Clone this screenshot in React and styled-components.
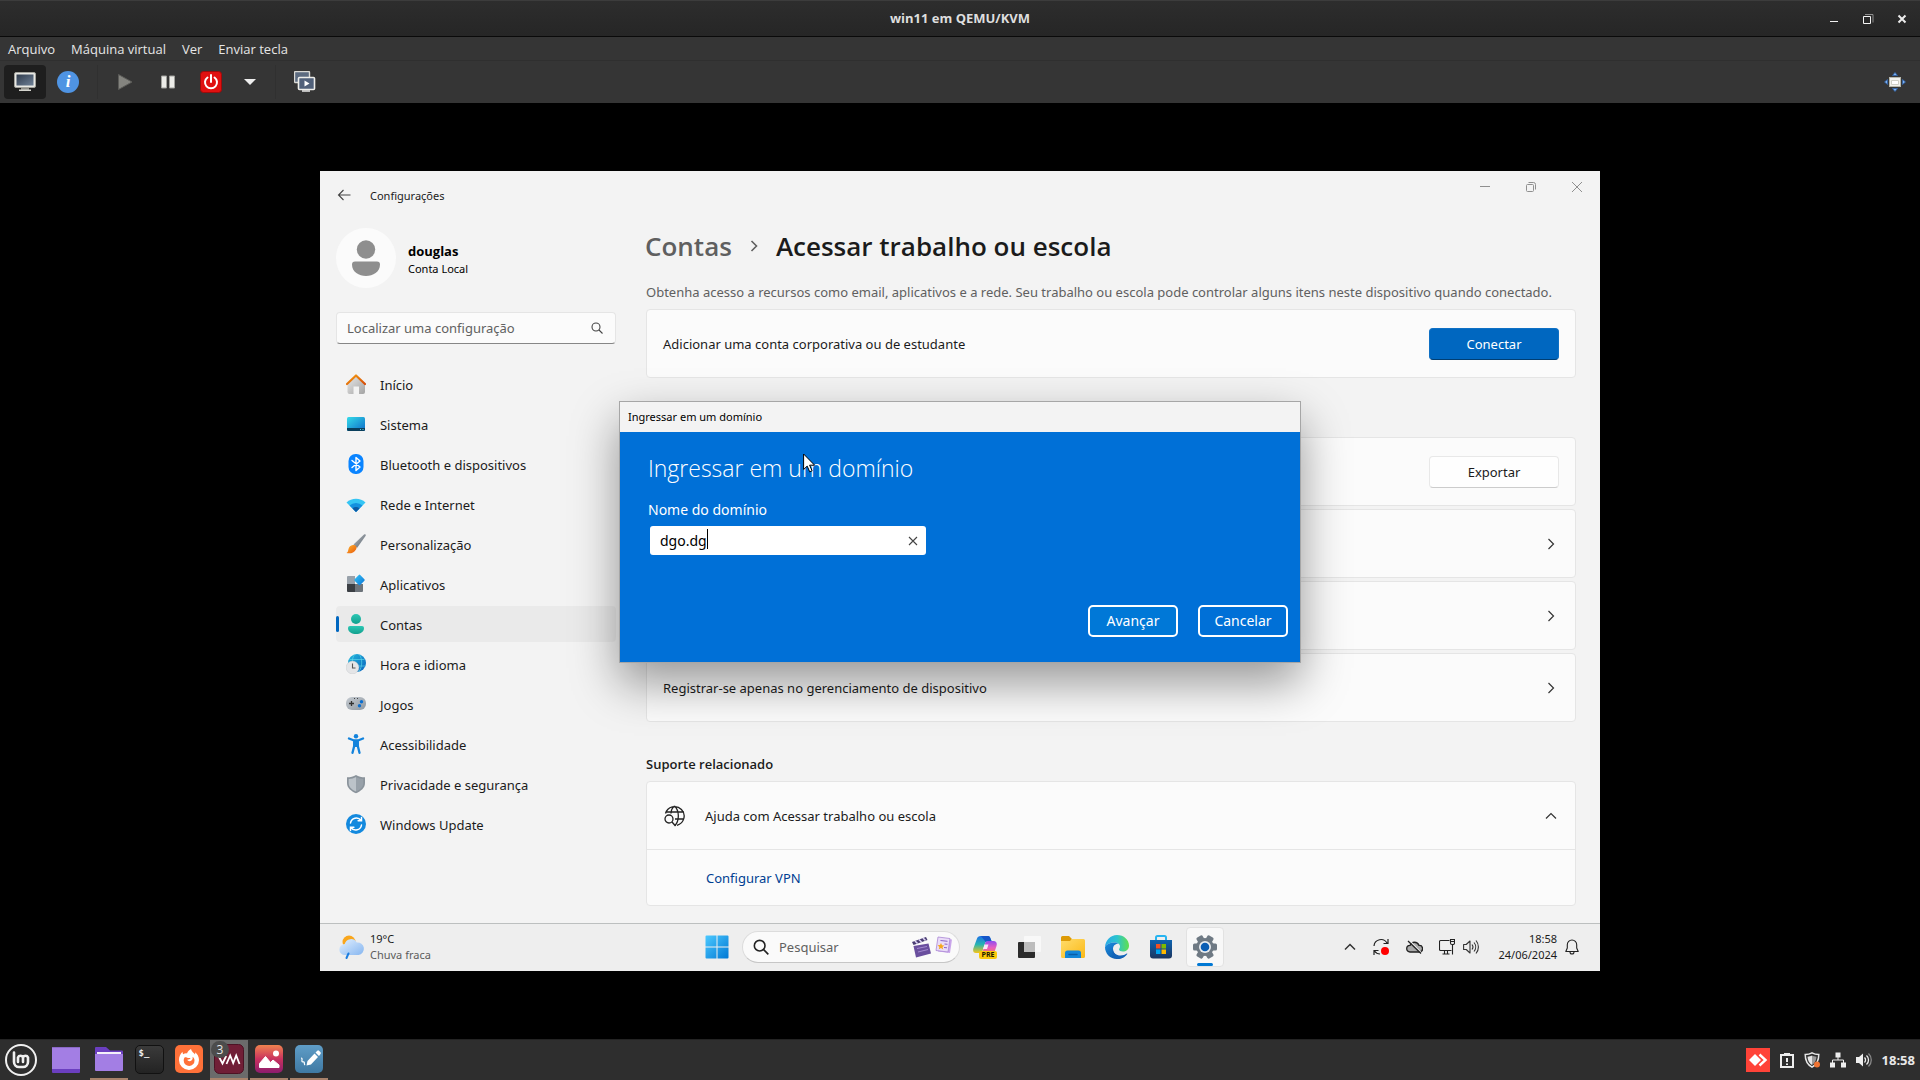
import React from "react";
import styled, { createGlobalStyle, css } from "styled-components";

const GlobalStyle = createGlobalStyle`
  *, *::before, *::after { box-sizing: border-box; }
  body { margin: 0; background: #000; }
  button, input { font: inherit; color: inherit; margin: 0; }
  button { border: 0; padding: 0; background: none; cursor: default; }
  h1, h2, p, ul { margin: 0; padding: 0; font-weight: inherit; }
  a { text-decoration: none; }
  svg { display: block; flex: none; }
`;

/* ---------- host desktop ---------- */

const Desktop = styled.div`
  min-height: 100vh;
  display: grid;
  grid-template-rows: auto auto auto 1fr auto;
  background: #000;
  color: #e6e6e6;
  font: 13px/20px "Open Sans", "Noto Sans", sans-serif;
`;

const HostTitleBar = styled.header`
  display: grid;
  grid-template-columns: 1fr auto 1fr;
  align-items: center;
  height: 37px;
  background: linear-gradient(#2d2d2d, #262626);
  border-top: 1px solid #3c3c3c;
  border-bottom: 1px solid #0a0a0a;
  color: #dedede;
`;

const HostTitle = styled.h1`
  grid-column: 2;
  padding-bottom: 2px;
  font-size: 13px;
  line-height: 20px;
  font-weight: 700;
`;

const HostControls = styled.div`
  display: flex;
  justify-content: flex-end;
  gap: 14px;
  padding-right: 8px;
`;

const IconButton = styled.button`
  display: grid;
  place-items: center;
  width: ${(p) => p.$w || 20}px;
  height: ${(p) => p.$h || 20}px;
`;

const MenuBar = styled.nav`
  display: flex;
  gap: 16px;
  height: 24px;
  padding: 2px 8px;
  background: #353535;
  border-bottom: 1px solid #2f2f2f;
`;

const MenuButton = styled.button`
  line-height: 20px;
`;

const ToolBar = styled.div`
  display: flex;
  align-items: center;
  height: 42px;
  padding: 4px 8px 4px 4px;
  background: #353535;
`;

const ToolButton = styled.button`
  display: grid;
  place-items: center;
  width: ${(p) => p.$w || 42}px;
  height: 34px;
  border-radius: 4px;
  background: ${(p) => (p.$pressed ? "#1e1e1e" : "transparent")};
`;

const ToolDivider = styled.span`
  width: 1px;
  height: 34px;
  margin: 0 ${(p) => p.$right}px 0 ${(p) => p.$left}px;
  background: #303030;
`;

const ToolSpacer = styled.span`
  flex: 1;
`;

const InfoBadge = styled.span`
  display: grid;
  place-items: center;
  width: 22px;
  height: 22px;
  border-radius: 50%;
  background: #4f94e3;
  color: #fff;
  font: italic 700 17px/22px "Liberation Serif", serif;
`;

const Display = styled.main`
  display: flex;
  align-items: center;
  padding: 0 calc(100% / 6);
`;

/* ---------- guest desktop ---------- */

const Guest = styled.section`
  position: relative;
  flex: 1;
  min-width: 0;
  background: #f3f3f3;
  color: #1b1b1b;
  font: 13px/20px "Noto Sans", "Open Sans", sans-serif;
`;

const SettingsTitleBar = styled.div`
  display: flex;
  align-items: center;
  height: 48px;
  padding-left: 14px;
`;

const SettingsTitle = styled.span`
  margin-left: 16px;
  padding-top: 2px;
  font-size: 11px;
  line-height: 16px;
`;

const SettingsControls = styled.div`
  display: flex;
  align-self: flex-start;
  margin-left: auto;
  color: #8f8f8f;
`;

const SettingsBody = styled.div`
  display: flex;
  gap: 30px;
  padding: 9px 24px 17px 16px;
`;

const Sidebar = styled.aside`
  flex: 0 0 280px;
`;

const Profile = styled.div`
  display: flex;
  align-items: center;
  gap: 12px;
  margin-bottom: 24px;
`;

const ProfileText = styled.div`
  padding-top: 4px;
  color: #000;
  font-size: 11px;
  line-height: 18px;
`;

const Avatar = styled.div`
  display: grid;
  place-items: center;
  width: 60px;
  height: 60px;
  border-radius: 50%;
  background: #fbfbfb;
`;

const ProfileName = styled.div`
  font: 700 13px/18px "Open Sans", sans-serif;
`;

const SearchBox = styled.label`
  display: flex;
  align-items: center;
  height: 32px;
  padding: 0 12px 0 10px;
  background: #fbfbfb;
  border: 1px solid #e5e5e5;
  border-bottom-color: #868686;
  border-radius: 4px;
`;

const PlainInput = styled.input`
  flex: 1;
  min-width: 0;
  padding: 0;
  border: 0;
  outline: 0;
  background: transparent;
  &::placeholder {
    color: #616161;
    opacity: 1;
  }
`;

const NavList = styled.nav`
  display: flex;
  flex-direction: column;
  gap: 4px;
  margin-top: 22px;
`;

const NavLabel = styled.span`
  padding-top: 2px;
`;

const NavItem = styled.a`
  display: flex;
  align-items: center;
  gap: 14px;
  height: 36px;
  padding-left: 10px;
  border-radius: 4px;
  color: #1b1b1b;
  ${(p) =>
    p.$active &&
    css`
      padding-left: 0;
      background: #eaeaea;
      &::before {
        content: "";
        width: 3px;
        height: 16px;
        margin-right: -7px;
        border-radius: 2px;
        background: #0067c0;
      }
    `}
`;

const Content = styled.div`
  flex: 1;
  min-width: 0;
`;

const Breadcrumb = styled.h2`
  display: flex;
  align-items: center;
  gap: 18px;
  margin: 0 0 18px -1px;
  font: 600 26px/36px "Open Sans", sans-serif;
`;

const BreadcrumbLink = styled.a`
  color: #5f5f5f;
`;

const Intro = styled.p`
  margin-bottom: 7px;
  color: #606060;
  white-space: nowrap;
`;

const cardFrame = css`
  background: #fbfbfb;
  border: 1px solid #e5e5e5;
  border-radius: 4px;
`;

const Card = styled.div`
  ${cardFrame}
  display: flex;
  align-items: center;
  justify-content: space-between;
  height: 69px;
  padding: 0 16px;
`;

const CardButton = styled.button`
  ${cardFrame}
  display: flex;
  align-items: center;
  justify-content: space-between;
  width: 100%;
  height: 69px;
  padding: 0 18px 0 16px;
  text-align: left;
`;

const CardStack = styled.div`
  display: flex;
  flex-direction: column;
  gap: 3px;
  margin: 59px 0 32px;
`;

const PushEnd = styled.span`
  margin-left: auto;
`;

const ActionButton = styled.button`
  width: 130px;
  height: 32px;
  margin-left: auto;
  border-radius: 4px;
  border: 1px solid ${(p) => (p.$primary ? "#0f70c4" : "#e8e8e8")};
  border-bottom-color: ${(p) => (p.$primary ? "#003e73" : "#cccccc")};
  background: ${(p) => (p.$primary ? "#0067c0" : "#fefefe")};
  color: ${(p) => (p.$primary ? "#fff" : "#1b1b1b")};
`;

const SectionTitle = styled.h2`
  margin-bottom: 7px;
  font: 600 13px/20px "Open Sans", sans-serif;
`;

const Expander = styled.div`
  ${cardFrame}
`;

const ExpanderHeader = styled.button`
  display: flex;
  align-items: center;
  gap: 19px;
  width: 100%;
  height: 67px;
  padding: 0 18px 0 17px;
  text-align: left;
`;

const ExpanderBody = styled.div`
  display: flex;
  align-items: center;
  height: 56px;
  padding-left: 59px;
  border-top: 1px solid #e5e5e5;
`;

const TextLink = styled.a`
  color: #003e92;
`;

/* ---------- dialog ---------- */

const Dialog = styled.form`
  position: absolute;
  top: 230px;
  left: 50%;
  width: 682px;
  transform: translateX(-50%);
  border: 1px solid #a6a6a6;
  background: #0070d7;
  box-shadow: 0 20px 44px rgba(0, 0, 0, 0.4);
  color: #fff;
`;

const DialogBar = styled.div`
  height: 30px;
  padding: 0 8px;
  background: #f3f3f3;
  color: #000;
  font-size: 11px;
  line-height: 30px;
`;

const DialogBody = styled.div`
  padding: 20px 12px 25px 28px;
  font-size: 14px;
`;

const DialogTitle = styled.h2`
  font: 300 23px/32px "Open Sans", sans-serif;
`;

const FieldLabel = styled.label`
  display: block;
  margin: 16px 0 6px;
  line-height: 20px;
`;

const Field = styled.div`
  position: relative;
  display: flex;
  align-items: center;
  width: 276px;
  height: 29px;
  margin-left: 2px;
  padding: 0 1px 0 10px;
  border-radius: 3px;
  background: #fff;
  color: #000;
`;

const Caret = styled.span`
  position: absolute;
  left: 57px;
  top: 3px;
  width: 1px;
  height: 20px;
  background: #000;
`;

const DialogActions = styled.div`
  display: flex;
  justify-content: flex-end;
  gap: 20px;
  margin-top: 50px;
`;

const DialogButton = styled.button`
  width: 90px;
  height: 32px;
  border: 2px solid #fff;
  border-radius: 5px;
  background: ${(p) => (p.$default ? "#0078d7" : "#0070d7")};
`;

const Pointer = styled.svg`
  position: absolute;
  left: 183px;
  top: 51px;
`;

/* ---------- guest taskbar ---------- */

const GuestTaskbar = styled.footer`
  display: grid;
  grid-template-columns: 1fr auto 1fr;
  align-items: center;
  height: 48px;
  padding: 0 17px 1px 19px;
  background: #eeeeee;
  border-top: 1px solid #bcbfbf;
`;

const Weather = styled.button`
  display: flex;
  align-items: center;
  gap: 5px;
  justify-self: start;
  text-align: left;
`;

const SmallLines = styled.span`
  display: block;
  min-width: 62px;
  font-size: 11px;
  line-height: 16px;
  text-align: ${(p) => p.$align || "left"};
  span {
    display: block;
  }
  span + span {
    color: ${(p) => p.$second || "inherit"};
  }
`;

const TaskApps = styled.div`
  display: flex;
  align-items: center;
  gap: 6px;
`;

const TaskSearch = styled.label`
  display: flex;
  align-items: center;
  width: 218px;
  height: 32px;
  padding: 0 6px 0 10px;
  gap: 10px;
  border: 1px solid #dcdcdc;
  border-bottom-color: #c6c6c6;
  border-radius: 16px;
  background: #fafafa;
`;

const SearchArt = styled.span`
  display: flex;
  gap: 4px;
`;

const TaskApp = styled.button`
  position: relative;
  display: grid;
  place-items: center;
  width: 38px;
  height: 40px;
  border-radius: 4px;
  ${(p) =>
    p.$active &&
    css`
      background: #f8f8f8;
      border: 1px solid #e2e2e2;
      &::after {
        content: "";
        position: absolute;
        left: 10px;
        bottom: 0;
        width: 16px;
        height: 3px;
        border-radius: 2px;
        background: #0078d4;
      }
    `}
`;

const PreTag = styled.span`
  position: absolute;
  left: 13px;
  top: 24px;
  width: 18px;
  height: 8px;
  border-radius: 2px;
  background: #fcc90c;
  color: #221a00;
  font: 700 7px/8px "Open Sans", sans-serif;
`;

const Tray = styled.div`
  display: flex;
  align-items: center;
  justify-self: end;
  gap: 16px;
`;

const TrayPair = styled.button`
  display: flex;
  gap: 8px;
`;

const ClockPair = styled.button`
  display: flex;
  align-items: center;
  gap: 8px;
  margin-right: 4px;
`;

/* ---------- host panel ---------- */

const HostPanel = styled.footer`
  display: flex;
  align-items: center;
  height: 41px;
  padding-right: 5px;
  background: #2e2e2e;
  border-top: 1px solid #242424;
`;

const PanelApps = styled.div`
  display: flex;
  align-items: center;
  gap: 2px;
`;

const PanelLauncher = styled.button`
  display: grid;
  place-items: center;
  width: ${(p) => p.$w || 44}px;
  height: 40px;
`;

const PanelApp = styled.button`
  position: relative;
  display: grid;
  place-items: center;
  width: 38px;
  height: 40px;
  background: ${(p) => (p.$focused ? "#6b6b6b" : "transparent")};
  border-bottom: 2px solid ${(p) => (p.$open ? "#a8826b" : "transparent")};
`;

const CountBadge = styled.span`
  position: absolute;
  left: 1px;
  top: 1px;
  width: 18px;
  height: 17px;
  border-radius: 9px;
  background: #4c4c4c;
  color: #e8e8e8;
  font-size: 12px;
  line-height: 17px;
  text-align: center;
`;

const Terminal = styled.span`
  width: 29px;
  height: 29px;
  padding: 2px 3px;
  border: 1px solid #111;
  border-radius: 5px;
  background: linear-gradient(#3a3a3a, #232323);
  color: #f0f0f0;
  font: 700 9px/10px "DejaVu Sans Mono", monospace;
  text-align: left;
`;

const HostTray = styled.div`
  display: flex;
  align-items: center;
  gap: 10px;
  margin-left: auto;
`;

const HostClock = styled.time`
  font-weight: 700;
  color: #e8e8e8;
`;

/* ---------- icons ---------- */

const Svg = ({ s = 20, w, h, vb, children, ...rest }) => (
  <svg
    width={w || s}
    height={h || s}
    viewBox={vb || `0 0 ${w || s} ${h || s}`}
    fill="none"
    aria-hidden="true"
    {...rest}
  >
    {children}
  </svg>
);

const Grad = ({ id, from, to, mid, x2 = 1, y2 = 1 }) => (
  <linearGradient id={id} x1="0" y1="0" x2={x2} y2={y2}>
    <stop offset="0" stopColor={from} />
    {mid && <stop offset=".5" stopColor={mid} />}
    <stop offset="1" stopColor={to} />
  </linearGradient>
);

const Chevron = ({ dir = "right", w = 1.2 }) => (
  <Svg s={12} stroke="#333" strokeWidth={w}>
    <path d={dir === "up" ? "M1 8.5 6 3.5l5 5" : "M3.5 1 8.5 6l-5 5"} />
  </Svg>
);

const Magnifier = ({ s = 12, color = "#444", w = 1.1 }) => (
  <Svg s={s} vb="0 0 12 12" stroke={color} strokeWidth={w}>
    <circle cx="5" cy="5" r="4" />
    <path d="m8 8 3.5 3.5" />
  </Svg>
);

const HomeIcon = () => (
  <Svg>
    <defs>
      <Grad id="hm" from="#e8e8e8" to="#a3a3a3" />
      <Grad id="hr" from="#f59d10" to="#d64b08" />
    </defs>
    <path d="M1.5 9.5 10 2l9 7.500V18a2 2 0 0 1-2 2h-4v-7.500H7.500V20h-4a2 2 0 0 1-2-2z" fill="url(#hm)" />
    <path d="M1 10 10 1.500 19 10" stroke="url(#hr)" strokeWidth="2.200" strokeLinecap="round" strokeLinejoin="round" />
  </Svg>
);
const SystemIcon = () => (
  <Svg>
    <defs><Grad id="sy" from="#35dbe9" to="#0d6cc8" /></defs>
    <rect x="1" y="3" width="18" height="14" rx="1.500" fill="url(#sy)" />
    <path d="M1 14h18v1.500a1.500 1.500 0 0 1-1.500 1.500h-15A1.500 1.500 0 0 1 1 15.500z" fill="#0a3f5c" />
    <path d="M14 15.500h1M16.500 15.500h1" stroke="#5fd0e8" />
  </Svg>
);
const BluetoothIcon = () => (
  <Svg>
    <rect x="2.500" width="15" height="20" rx="7" fill="#0a84ff" />
    <path d="m6 6.500 8 6.500-4 3.500v-13L14 7l-8 6.500" stroke="#fff" strokeWidth="1.400" strokeLinejoin="round" strokeLinecap="round" />
  </Svg>
);
const WifiIcon = () => (
  <Svg>
    <path d="M.5 8.500a14 14 0 0 1 19 0L10 18z" fill="#35c5f4" />
    <path d="M3.500 11.500a9.500 9.500 0 0 1 13 0L10 18z" fill="#1490df" />
    <path d="M6.500 14.500a5 5 0 0 1 7 0L10 18z" fill="#0c59a4" />
  </Svg>
);
const BrushIcon = () => (
  <Svg>
    <defs><Grad id="br" from="#ffb52e" to="#e8590c" /><Grad id="bh" from="#b4bac0" to="#5c6670" /></defs>
    <path d="M18 .6c1.200-.8 2.300.3 1.500 1.500L11 14l-3.500-3.500z" fill="url(#bh)" />
    <path d="M7 11c2.500-.5 4.500 2 3 4.500C8 19 4 20 .5 19c1.500-1 1.500-2 2-4 .5-2.300 2-3.800 4.500-4z" fill="url(#br)" />
  </Svg>
);
const AppsIcon = () => (
  <Svg>
    <defs><Grad id="ap" from="#37c4f5" to="#0a74d6" /></defs>
    <path d="M1 3a1 1 0 0 1 1-1h7v8H1z" fill="#98a1aa" />
    <path d="M1 10h8v8H2a1 1 0 0 1-1-1z" fill="#3b3f44" />
    <path d="M9 10h8v7a1 1 0 0 1-1 1H9z" fill="#6d747b" />
    <path d="M12.800.9a1 1 0 0 1 1.400 0l4.200 4.400a1 1 0 0 1 0 1.400l-4.200 4.300a1 1 0 0 1-1.400 0L8.600 6.700a1 1 0 0 1 0-1.400z" fill="url(#ap)" />
  </Svg>
);
const AccountIcon = () => (
  <Svg>
    <defs><Grad id="ac" from="#2cc7b4" to="#12a08e" x2={0} /></defs>
    <circle cx="10" cy="5" r="5" fill="url(#ac)" />
    <path d="M4 12h12a2 2 0 0 1 2 2c0 4-4 6-8 6s-8-2-8-6a2 2 0 0 1 2-2z" fill="url(#ac)" />
  </Svg>
);
const TimeIcon = () => (
  <Svg>
    <defs><Grad id="ti" from="#22b8dd" to="#0b63bd" /></defs>
    <circle cx="11" cy="9" r="9" fill="url(#ti)" />
    <path d="M3.500 5.500h15M9 12h10.500M8.500.5c-2 3-2.500 6-2 9M13.500.5c3 5 3 12-.5 17" stroke="#5fdcec" strokeOpacity=".7" strokeWidth=".9" />
    <circle cx="6.500" cy="13.500" r="6.400" fill="#e4e5e7" stroke="#c3c5c8" strokeWidth=".4" />
    <path d="M6.500 9.500v4.500h3" stroke="#555" strokeWidth="1.100" />
  </Svg>
);
const GamesIcon = () => (
  <Svg>
    <defs><Grad id="ga" from="#c4cad0" to="#8f98a1" /></defs>
    <rect y="3" width="20" height="13" rx="6" fill="url(#ga)" />
    <path d="M5.500 7v5M3 9.500h5" stroke="#333" strokeWidth="1.300" />
    <path d="M8 4.500h1M11 4.500h1" stroke="#444" />
    <circle cx="15.500" cy="7.700" r="1.700" fill="#0b6fd0" />
    <circle cx="13.500" cy="11.700" r="1.700" fill="#0b6fd0" />
  </Svg>
);
const AccessIcon = () => (
  <Svg>
    <circle cx="10" cy="2.200" r="2.200" fill="#1383dc" />
    <path d="M3 4.500 8 6.500h4l5-2M8.200 7v5L6.500 18.800M11.800 7v5l1.700 6.800" stroke="#1383dc" strokeWidth="2.300" strokeLinecap="round" strokeLinejoin="round" />
    <path d="M7.500 6h5v7h-5z" fill="#1383dc" />
  </Svg>
);
const ShieldIcon = () => (
  <Svg>
    <path d="M10 1c2.500 1.700 5.500 2.300 9 2.300V9c0 5-4 8-9 10.300C5 17 1 14 1 9V3.300C4.500 3.300 7.500 2.700 10 1z" fill="#8a939b" />
    <path d="M10 3c2 1.300 4.500 1.900 7.300 2V9c0 4-3 6.500-7.300 8.500z" fill="#98a1a9" />
    <path d="M10 3C8 4.300 5.500 4.900 2.700 5V9c0 4 3 6.500 7.300 8.500z" fill="#bcc3c9" />
  </Svg>
);
const UpdateIcon = () => (
  <Svg>
    <circle cx="10" cy="10" r="10" fill="#1389de" />
    <path d="M4.500 9a5.800 5.800 0 0 1 10.500-2.500M15.500 11A5.800 5.800 0 0 1 5 13.500M15.500 3.500v3.300h-3.400M4.500 16.500v-3.300h3.400" stroke="#fff" strokeWidth="1.500" strokeLinecap="round" />
  </Svg>
);

const NAV = [
  ["Início", HomeIcon],
  ["Sistema", SystemIcon],
  ["Bluetooth e dispositivos", BluetoothIcon],
  ["Rede e Internet", WifiIcon],
  ["Personalização", BrushIcon],
  ["Aplicativos", AppsIcon],
  ["Contas", AccountIcon],
  ["Hora e idioma", TimeIcon],
  ["Jogos", GamesIcon],
  ["Acessibilidade", AccessIcon],
  ["Privacidade e segurança", ShieldIcon],
  ["Windows Update", UpdateIcon],
];

const WeatherIcon = () => (
  <Svg w={26} h={26}>
    <defs><Grad id="we" from="#e3f0ff" to="#86b6f0" /></defs>
    <circle cx="10" cy="8" r="6.500" fill="#f9a61c" />
    <path d="M6 21a5.500 5.500 0 0 1-.3-11 6.500 6.500 0 0 1 12-1.500A6.300 6.300 0 0 1 19.500 21z" fill="url(#we)" />
    <path d="m9.500 19.500-2 4.500" stroke="#1c7ee0" strokeWidth="2" strokeLinecap="round" />
  </Svg>
);
const StartIcon = () => (
  <Svg s={24}>
    <defs><Grad id="st" from="#4cc9ff" to="#0078d4" /></defs>
    <path d="M.5 1.500a1 1 0 0 1 1-1h10v11H.5zM12.500.5h10a1 1 0 0 1 1 1v10h-11zM.5 12.500h11v11h-10a1 1 0 0 1-1-1zM12.500 12.500h11v10a1 1 0 0 1-1 1h-10z" fill="url(#st)" />
  </Svg>
);
const ClapperIcon = () => (
  <Svg w={20} h={22}>
    <path d="m1 6 14-5 1.500 3L2.500 9z" fill="#4a3d73" />
    <path d="m4 5 2.500 2.500M8 3.500 10.500 6M12 2l2.500 2.500" stroke="#ddd3f5" strokeWidth="1.600" />
    <path d="m2.500 10 15-2.500L20 17.500 5 21.500z" fill="#6a4f9e" />
    <path d="m6 12.500 10-2M7 16l10-2.500" stroke="#a48ad0" />
  </Svg>
);
const NotesIcon = () => (
  <Svg w={18} h={18}>
    <path d="m5 2 12 1.500L15 17 3 15.500z" fill="#c9a5ea" />
    <path d="m3 1 12 1.500L13 16 1 14.500z" fill="#eadcf8" stroke="#a987d4" strokeWidth=".8" />
    <path d="m5.500 4.500 7 .8M9.500 8l3 .3M9 11.500l3 .3" stroke="#8a63c4" />
    <path d="m6 7 1 2.200 2.400.2-1.900 1.600.7 2.400L6 12l-2.200 1.300.6-2.400L2.600 9.300l2.400-.2z" fill="#f5a71b" />
  </Svg>
);
const CopilotIcon = () => (
  <Svg s={24}>
    <defs>
      <Grad id="c1" from="#1d6fe8" mid="#27b5b0" to="#f5c518" x2={0} />
      <Grad id="c2" from="#8f4df0" mid="#e65ec0" to="#f77b5a" x2={0} />
    </defs>
    <path d="M8 1h7c1.500 0 2 1 2.500 2.500L18.500 6H15c-2 0-2.500 1-3 2.500L9.500 16C9 17.500 8 18 6.500 18H3c-3 0-3.300-2.500-2.500-5L4 3.500C4.600 2 5.500 1 8 1z" fill="url(#c1)" />
    <path d="M15 6h5.500c3 0 3.800 2.500 3 5l-2.700 8H9l3-10.500C12.500 7 13 6 15 6z" fill="url(#c2)" />
    <path d="M8 1h7c1.500 0 2 1 2.500 2.500L18.500 6H15c-1 0-1.800.3-2.300 1L8 1z" fill="#1556c9" />
    <path d="M11.500 9.500 10 14h4l1.500-4.500z" fill="#fff" opacity=".85" />
  </Svg>
);
const TaskViewIcon = () => (
  <Svg s={24}>
    <rect x="1" y="7" width="17" height="16" rx="1" fill="#2b2b2b" />
    <rect x="7" y="1" width="17" height="16" rx="1" fill="#f8f8f8" />
    <path d="M7 7h11v10H7z" fill="#bdbdbd" />
  </Svg>
);
const FolderIcon = () => (
  <Svg s={24}>
    <defs><Grad id="fo" from="#ffdc6b" to="#fbb917" /></defs>
    <path d="M0 2.500A1.500 1.500 0 0 1 1.500 1H8l3 3-2 3H0z" fill="#dd9a06" />
    <path d="M9 6 11 4h11.500A1.500 1.500 0 0 1 24 5.500v16a1.500 1.500 0 0 1-1.500 1.500h-21A1.500 1.500 0 0 1 0 21.500V6z" fill="url(#fo)" />
    <path d="M4 23v-5a2.500 2.500 0 0 1 2.500-2.500h11A2.500 2.500 0 0 1 20 18v5z" fill="#1386d8" />
    <path d="M8 19.500h8" stroke="#0a5ea8" strokeWidth="1.500" strokeLinecap="round" />
  </Svg>
);
const EdgeIcon = () => (
  <Svg s={24}>
    <defs>
      <Grad id="e1" from="#28a9e8" mid="#2cc4cf" to="#62e04c" y2={0} />
      <Grad id="e2" from="#1b8fe0" to="#0c4a9c" />
    </defs>
    <path d="M0 12C.5 5 5.500 0 12 0c7 0 12 5 12 10.500 0 4-3 6-6 6-2.500 0-4-1-4-2 0-.8 1-1.200 1-3 0-2.500-2.500-4-5.500-4C5 7.500 1.500 9 0 12z" fill="url(#e1)" />
    <path d="M0 12c1.500-3 5-4.500 9.500-4.500 1.500 0 3 .5 4 1.200C10 8.500 8 11 8 14c0 5 4.500 8.500 9 8 1-.1 2-.5 3-1-2 2-5 3-8 3C5 24 0 18.500 0 12z" fill="url(#e2)" />
    <path d="M8 14c0 4 3.500 6.500 7.500 6.500 2.700 0 4.700-.9 6.200-2 .5-.3.900.1.600.6C20.500 21.500 18 23.500 14 24c-5-.5-7.500-5-6-10z" fill="#1363b8" />
  </Svg>
);
const StoreIcon = () => (
  <Svg s={24}>
    <defs><Grad id="so" from="#0d63b0" to="#1b355f" x2={0} /></defs>
    <path d="M7 6V2.500A1.500 1.500 0 0 1 8.500 1h7A1.500 1.500 0 0 1 17 2.500V6" stroke="#27b4f0" strokeWidth="2" />
    <path d="M1 5h22v15.500a3 3 0 0 1-3 3H4a3 3 0 0 1-3-3z" fill="url(#so)" />
    <path d="M7 9h4.500v4.500H7z" fill="#f25022" /><path d="M12.500 9H17v4.500h-4.500z" fill="#7fba00" />
    <path d="M7 14.500h4.500V19H7z" fill="#00a4ef" /><path d="M12.500 14.500H17V19h-4.500z" fill="#ffb900" />
  </Svg>
);
const GearIcon = () => (
  <Svg s={24}>
    <g fill="#6f7a84">
      {[0, 60, 120].map((a) => (
        <rect key={a} x="8.500" y="0" width="7" height="24" rx="1.500" transform={`rotate(${a + 30} 12 12)`} />
      ))}
      <circle cx="12" cy="12" r="9" />
    </g>
    <circle cx="12" cy="12" r="6" fill="#e9edf0" />
    <circle cx="12" cy="12" r="4.300" fill="#0a5eb4" />
  </Svg>
);
const SyncIcon = () => (
  <Svg s={18}>
    <path d="M2 8a7 7 0 0 1 13-3M16 1v4.500h-4.500M2 17v-4.500h4.500M2.500 13A7 7 0 0 0 8 16" stroke="#222" strokeWidth="1.200" />
    <circle cx="13" cy="13" r="4" fill="#f00" />
  </Svg>
);
const CloudOffIcon = () => (
  <Svg w={17} h={16}>
    <path d="M4 13a3.300 3.300 0 0 1 0-6.600 4.800 4.800 0 0 1 9 0 3.300 3.300 0 0 1 .5 6.600z" fill="#aaa" stroke="#222" strokeWidth="1.300" />
    <path d="m3 1 12 12.500" stroke="#eee" strokeWidth="1.200" />
    <path d="m2 2 13 12.500" stroke="#222" strokeWidth="1.300" />
  </Svg>
);
const NetworkIcon = () => (
  <Svg s={16} stroke="#222" strokeWidth="1.100">
    <path d="M10.500 1.500h-9a1 1 0 0 0-1 1v8a1 1 0 0 0 1 1h11M5.500 11.500v3.500M8.500 11.500v3.500M3.500 15h7" />
    <path d="M11.500.5h4V4a1.500 1.500 0 0 1-1.500 1.500h-1A1.500 1.500 0 0 1 11.500 4zM11.500 2.500h4M13.500 5.500v10" />
  </Svg>
);
const SpeakerIcon = () => (
  <Svg s={16} stroke="#333" strokeWidth="1.100" strokeLinejoin="round">
    <path d="M.6 5.500h2.600L7 2v12l-3.800-3.500H.6zM9 5.500a4 4 0 0 1 0 5M11 3.500a7 7 0 0 1 0 9M13 1.500a10 10 0 0 1 0 13" />
  </Svg>
);
const BellIcon = () => (
  <Svg w={14} h={16} stroke="#222" strokeWidth="1.100" strokeLinejoin="round">
    <path d="M7 1a4.700 4.700 0 0 0-4.700 4.700V9L.8 12.500h12.400L11.700 9V5.700A4.700 4.700 0 0 0 7 1zM5 13a2 2 0 0 0 4 0" />
  </Svg>
);
const GlobeIcon = () => (
  <Svg s={22} stroke="#222" strokeWidth="1.300">
    <path d="M1.500 8.500A9.500 9.500 0 1 1 13 20.300M2 7h18M11 14h9M10.500 1C8 3 7 6 7 8.500M10.500 1c5 4.500 5 14.500.5 19.500" />
    <circle cx="5" cy="14" r="4" />
    <path d="m8 17 3.500 4" />
  </Svg>
);

const MonitorIcon = () => (
  <Svg w={22} h={20}>
    <defs><Grad id="mo" from="#2f3b4c" to="#6f8197" /></defs>
    <path d="M7 15h8v3H7z" fill="#8e8e88" />
    <path d="M5 17.500h12V19H5z" fill="#d4d4ce" />
    <rect x=".5" y=".5" width="21" height="15" rx="1.500" fill="#e9e9e4" stroke="#a2a29c" />
    <rect x="2.500" y="2.500" width="17" height="11" fill="url(#mo)" />
  </Svg>
);
const PowerIcon = () => (
  <Svg s={22}>
    <rect x=".5" y=".5" width="21" height="21" rx="3" fill="#e01010" stroke="#9d0b0b" />
    <path d="M7.500 6.500a6 6 0 1 0 7 0M11 4v7" stroke="#fff" strokeWidth="2" strokeLinecap="round" />
  </Svg>
);
const ScreensIcon = () => (
  <Svg w={22} h={22}>
    <rect x=".5" y=".5" width="15" height="11" rx="1" fill="#5c6b80" stroke="#d8d8d4" strokeWidth="1.400" />
    <path d="M8 18h8v3H8z" fill="#bbb" />
    <rect x="4.500" y="6.500" width="16" height="12" rx="1" fill="#51617a" stroke="#eeeeea" strokeWidth="1.600" />
    <path d="m10.500 9.500 5 3-5 3z" fill="#fff" />
  </Svg>
);
const FullscreenIcon = () => (
  <Svg w={22} h={20}>
    <rect x="5.500" y="5.500" width="11" height="9" fill="#f1f1ec" stroke="#b7b7ac" />
    <path d="M7.500 8.500h7v4h-7z" fill="#fff" stroke="#cfcfc6" />
    <path d="m11 .5 2.500 3h-5zM11 19.500l2.500-3h-5zM.5 10l3-2.500v5zM21.500 10l-3-2.500v5z" fill="#7fb0ee" stroke="#2f62a8" strokeWidth=".8" />
  </Svg>
);

const MintIcon = () => (
  <Svg s={32} stroke="#f0f0f0" strokeLinecap="round">
    <circle cx="16" cy="16" r="15" strokeWidth="2" />
    <path d="M9 8.500V18a5 5 0 0 0 5 5h4a5 5 0 0 0 5-5v-4.500a2.700 2.700 0 0 0-5 0V18M18 13.500a2.700 2.700 0 0 0-5 0V18" strokeWidth="2.600" />
  </Svg>
);
const DesktopIcon = () => (
  <Svg s={28}>
    <path d="M0 2h28v22H0z" fill="#a37ee4" />
    <path d="M0 23h28v3a1 1 0 0 1-1 1H1a1 1 0 0 1-1-1z" fill="#6b3fc0" />
    <path d="M0 1.500h28" stroke="#8a68c6" />
  </Svg>
);
const FilesIcon = () => (
  <Svg s={28}>
    <path d="M0 3a1 1 0 0 1 1-1h10l4 3.500h12a1 1 0 0 1 1 1V10H0z" fill="#6b3fc0" />
    <path d="M2 7h24v3H2z" fill="#f4f0fa" />
    <path d="M0 9h28v16a1 1 0 0 1-1 1H1a1 1 0 0 1-1-1z" fill="#a37ee4" />
  </Svg>
);
const FirefoxIcon = () => (
  <Svg s={28}>
    <rect width="28" height="28" rx="5" fill="#ff7139" />
    <path d="M16 4c.5 2.500 3 4 4 5.500.3-.8.300-1.500.1-2.200 2.300 1.700 3.900 4.700 3.900 7.700a10 10 0 0 1-20 0c0-3.500 1.300-6 3.500-8.300 0 1 .2 1.800.7 2.500 1-.6 2.300-1 3.800-.8C12.500 6.500 14.500 5 16 4z" fill="#fff" />
    <path d="M9.500 12.500c1.200-.6 2.500-.3 3.300.5h2.700c-.3 1-1.500 1.700-3.300 1.800.6 1.500 3 2 4.500.5 1-1 1.200-2.300.8-3.600 1.500 1 2 2.300 2 3.800a5.400 5.400 0 0 1-10.800.3c0-1.300.2-2.300.8-3.300z" fill="#ff7139" />
  </Svg>
);
const VirtIcon = () => (
  <Svg s={30}>
    <rect x=".5" y=".5" width="29" height="29" rx="5" fill="#701e36" stroke="#4d1224" />
    <path d="m4.500 12 4 7.500 3.700-7.500M12.500 20l3.700-8.500 3 7.500 3-7.500 3.300 8.500" stroke="#fff" strokeWidth="1.800" />
  </Svg>
);
const PhotoIcon = () => (
  <Svg s={28}>
    <defs><Grad id="ph" from="#f0824f" mid="#c9325f" to="#8c1c6e" x2={0} /></defs>
    <rect width="28" height="28" rx="5" fill="url(#ph)" />
    <path d="m4.500 22.500v-4l6-7 5 6 2.500-2.500 6 5v2.500z" fill="#fff" stroke="#fff" strokeLinejoin="round" />
    <circle cx="21" cy="8.500" r="3" fill="#fff" />
  </Svg>
);
const PenIcon = () => (
  <Svg s={28}>
    <defs><Grad id="pe" from="#5f9dc7" to="#3f79a3" x2={0} /></defs>
    <rect width="28" height="28" rx="5" fill="url(#pe)" />
    <path d="m11.500 20.500 1-4.500 7-7.500 3.500 3.500-7 7.500z" fill="#fff" />
    <path d="m20.500 7.500 1.800-1.800a1.200 1.200 0 0 1 1.700 0l1.500 1.500a1.200 1.200 0 0 1 0 1.700L24 11z" fill="#fff" />
    <path d="M6 13c2 0 .5 2.500 1 3.500s1.800-.3 2.200.7-.3 2 .8 2.800" stroke="#fff" strokeWidth="1.200" />
  </Svg>
);
const AnyDeskIcon = () => (
  <Svg s={24}>
    <path d="M0 0h24v24H0z" fill="#ff4338" />
    <path d="m3 12 6-6 6 6-6 6z" fill="#fff" />
    <path d="m13.500 6.500 6 5.500-6 5.500" stroke="#fff" strokeWidth="2.400" />
  </Svg>
);
const ClipboardIcon = () => (
  <Svg w={14} h={16}>
    <path d="M1 3h12v12H1z" stroke="#eee" strokeWidth="2" />
    <path d="M4 1h6v3H4z" fill="#eee" />
    <path d="M7 6v4M7 11.500v1.500" stroke="#eee" strokeWidth="2" />
  </Svg>
);
const HostShieldIcon = () => (
  <Svg s={16}>
    <path d="M8 .8c2 1.200 4.300 1.700 6.800 1.700 0 6-1.800 10-6.800 12.700C3 12.500 1.200 8.500 1.200 2.500 3.700 2.500 6 2 8 .8z" stroke="#e6e6e6" strokeWidth="1.500" />
    <path d="M8 3.500v9.500C5 11 3.700 8.500 3.500 4.700 5.200 4.700 6.700 4.200 8 3.500z" fill="#e6e6e6" />
    <path d="M8 3.500v9.500c3-2 4.300-4.500 4.500-8.300-1.700 0-3.200-.5-4.500-1.200z" fill="#9a9a9a" />
    <circle cx="13" cy="12.500" r="3" fill="#f07433" />
  </Svg>
);
const HostNetIcon = () => (
  <Svg s={16}>
    <path d="M5.500.5h5v5h-5zM0 10.500h5v5H0zM11 10.500h5v5h-5z" fill="#eee" />
    <path d="M8 5v3M2.500 11V8h11v3" stroke="#eee" />
  </Svg>
);
const HostVolumeIcon = () => (
  <Svg s={16}>
    <path d="M0 5h3l4-3.500v13L3 11H0z" fill="#eee" />
    <path d="M8.500 5.500a3.500 3.500 0 0 1 0 5M10.500 3.500a6 6 0 0 1 0 9" stroke="#eee" strokeWidth="1.300" />
    <path d="M12.500 1.500a9 9 0 0 1 0 13" stroke="#888" strokeWidth="1.300" />
  </Svg>
);

/* ---------- sections ---------- */

function HostHeader() {
  return (
    <>
      <HostTitleBar>
        <HostTitle>win11 em QEMU/KVM</HostTitle>
        <HostControls>
          <IconButton aria-label="Minimizar">
            <Svg s={12}><path d="M2 8.500h8" stroke="#f2f2f2" /></Svg>
          </IconButton>
          <IconButton aria-label="Restaurar">
            <Svg s={12}>
              <path d="M3 1.500h8v8" stroke="#8d8d8d" />
              <path d="M1.500 3.500h7v7h-7z" stroke="#f5f5f5" />
            </Svg>
          </IconButton>
          <IconButton aria-label="Fechar">
            <Svg s={12}><path d="m2.500 2.500 7 7m0-7-7 7" stroke="#ececec" strokeWidth="2" /></Svg>
          </IconButton>
        </HostControls>
      </HostTitleBar>
      <MenuBar>
        {["Arquivo", "Máquina virtual", "Ver", "Enviar tecla"].map((m) => (
          <MenuButton key={m}>{m}</MenuButton>
        ))}
      </MenuBar>
      <ToolBar>
        <ToolButton $pressed aria-label="Console"><MonitorIcon /></ToolButton>
        <ToolButton $w={44} aria-label="Detalhes"><InfoBadge>i</InfoBadge></ToolButton>
        <ToolDivider $left={7} $right={6} />
        <ToolButton aria-label="Executar">
          <Svg s={16}><path d="M1.500.5 15 8 1.500 15.500z" fill="#84847f" stroke="#5b5b58" /></Svg>
        </ToolButton>
        <ToolButton $w={44} aria-label="Pausar">
          <Svg s={14}><path d="M.5 1h5v12h-5zM8.500 1h5v12h-5z" fill="#ecece8" stroke="#a0a09c" /></Svg>
        </ToolButton>
        <ToolButton aria-label="Desligar"><PowerIcon /></ToolButton>
        <ToolButton $w={36} aria-label="Opções de desligamento">
          <Svg s={12}><path d="M0 3h12L6 9z" fill="#eee" /></Svg>
        </ToolButton>
        <ToolDivider $left={7} $right={8} />
        <ToolButton aria-label="Snapshots"><ScreensIcon /></ToolButton>
        <ToolSpacer />
        <ToolButton $w={34} aria-label="Tela cheia"><FullscreenIcon /></ToolButton>
      </ToolBar>
    </>
  );
}

function SettingsWindow() {
  return (
    <>
      <SettingsTitleBar>
        <IconButton aria-label="Voltar">
          <Svg s={14} stroke="#444" strokeWidth="1.100"><path d="M13.500 7h-12M6.500 2l-5 5 5 5" /></Svg>
        </IconButton>
        <SettingsTitle>Configurações</SettingsTitle>
        <SettingsControls>
          <IconButton $w={46} $h={32} aria-label="Minimizar janela">
            <Svg s={10} stroke="currentColor"><path d="M0 4.500h10" /></Svg>
          </IconButton>
          <IconButton $w={46} $h={32} aria-label="Restaurar janela">
            <Svg s={10} stroke="currentColor">
              <rect x=".5" y="2.500" width="7" height="7" rx="1" />
              <path d="M2.500.5h5a2 2 0 0 1 2 2v5" />
            </Svg>
          </IconButton>
          <IconButton $w={46} $h={32} aria-label="Fechar janela">
            <Svg s={10} stroke="currentColor"><path d="m0 0 10 10M10 0 0 10" /></Svg>
          </IconButton>
        </SettingsControls>
      </SettingsTitleBar>
      <SettingsBody>
        <Sidebar>
          <Profile>
            <Avatar>
              <Svg w={30} h={36} fill="#8e8e8e">
                <circle cx="15" cy="9.500" r="9.200" />
                <path d="M4 21.500h22a3 3 0 0 1 3 3C29 32 22 36 15 36S1 32 1 24.500a3 3 0 0 1 3-3z" />
              </Svg>
            </Avatar>
            <ProfileText>
              <ProfileName>douglas</ProfileName>
              <div>Conta Local</div>
            </ProfileText>
          </Profile>
          <SearchBox>
            <PlainInput placeholder="Localizar uma configuração" aria-label="Localizar uma configuração" />
            <Magnifier />
          </SearchBox>
          <NavList>
            {NAV.map(([label, Icon]) => (
              <NavItem key={label} href="#" $active={label === "Contas"}>
                <Icon />
                <NavLabel>{label}</NavLabel>
              </NavItem>
            ))}
          </NavList>
        </Sidebar>
        <Content>
          <Breadcrumb>
            <BreadcrumbLink href="#">Contas</BreadcrumbLink>
            <Svg w={8} h={12} stroke="#5f5f5f" strokeWidth="1.600"><path d="m1.500 1 5 5-5 5" /></Svg>
            <span>Acessar trabalho ou escola</span>
          </Breadcrumb>
          <Intro>
            Obtenha acesso a recursos como email, aplicativos e a rede. Seu trabalho ou escola pode
            controlar alguns itens neste dispositivo quando conectado.
          </Intro>
          <Card>
            Adicionar uma conta corporativa ou de estudante
            <ActionButton $primary>Conectar</ActionButton>
          </Card>
          <CardStack>
            <Card><ActionButton>Exportar</ActionButton></Card>
            <CardButton aria-label="Abrir"><PushEnd><Chevron /></PushEnd></CardButton>
            <CardButton aria-label="Abrir"><PushEnd><Chevron /></PushEnd></CardButton>
            <CardButton>
              Registrar-se apenas no gerenciamento de dispositivo
              <Chevron />
            </CardButton>
          </CardStack>
          <SectionTitle>Suporte relacionado</SectionTitle>
          <Expander>
            <ExpanderHeader aria-expanded="true">
              <GlobeIcon />
              Ajuda com Acessar trabalho ou escola
              <PushEnd><Chevron dir="up" /></PushEnd>
            </ExpanderHeader>
            <ExpanderBody><TextLink href="#">Configurar VPN</TextLink></ExpanderBody>
          </Expander>
        </Content>
      </SettingsBody>
    </>
  );
}

function DomainDialog() {
  return (
    <Dialog onSubmit={(e) => e.preventDefault()}>
      <DialogBar>Ingressar em um domínio</DialogBar>
      <DialogBody>
        <DialogTitle>Ingressar em um domínio</DialogTitle>
        <FieldLabel htmlFor="domain">Nome do domínio</FieldLabel>
        <Field>
          <PlainInput id="domain" defaultValue="dgo.dg" spellCheck={false} />
          <Caret />
          <IconButton type="button" $w={24} aria-label="Limpar">
            <Svg s={10} stroke="#444" strokeWidth="1.100"><path d="m1 1 8 8M9 1 1 9" /></Svg>
          </IconButton>
        </Field>
        <DialogActions>
          <DialogButton $default>Avançar</DialogButton>
          <DialogButton type="button">Cancelar</DialogButton>
        </DialogActions>
      </DialogBody>
      <Pointer width="13" height="20" viewBox="0 0 13 20" aria-hidden="true">
        <path d="M.6 1v15.500l3.600-3.400 2.500 5.700 2.400-1-2.500-5.600h5z" fill="#fff" stroke="#000" />
      </Pointer>
    </Dialog>
  );
}

function Taskbar() {
  return (
    <GuestTaskbar>
      <Weather>
        <WeatherIcon />
        <SmallLines $second="#5c5c5c"><span>19°C</span><span>Chuva fraca</span></SmallLines>
      </Weather>
      <TaskApps>
        <TaskApp aria-label="Iniciar"><StartIcon /></TaskApp>
        <TaskSearch>
          <Magnifier s={16} color="#222" w={1.2} />
          <PlainInput placeholder="Pesquisar" aria-label="Pesquisar" />
          <SearchArt><ClapperIcon /><NotesIcon /></SearchArt>
        </TaskSearch>
        <TaskApp aria-label="Copilot"><CopilotIcon /><PreTag>PRE</PreTag></TaskApp>
        <TaskApp aria-label="Visão de tarefas"><TaskViewIcon /></TaskApp>
        <TaskApp aria-label="Explorador"><FolderIcon /></TaskApp>
        <TaskApp aria-label="Edge"><EdgeIcon /></TaskApp>
        <TaskApp aria-label="Loja"><StoreIcon /></TaskApp>
        <TaskApp $active aria-label="Configurações"><GearIcon /></TaskApp>
      </TaskApps>
      <Tray>
        <IconButton $w={12} aria-label="Ícones ocultos"><Chevron dir="up" w={1.5} /></IconButton>
        <IconButton $w={18} aria-label="Atualização"><SyncIcon /></IconButton>
        <IconButton $w={17} aria-label="OneDrive"><CloudOffIcon /></IconButton>
        <TrayPair aria-label="Rede e som"><NetworkIcon /><SpeakerIcon /></TrayPair>
        <ClockPair>
          <SmallLines $align="right"><span>18:58</span><span>24/06/2024</span></SmallLines>
          <BellIcon />
        </ClockPair>
      </Tray>
    </GuestTaskbar>
  );
}

function Panel() {
  return (
    <HostPanel>
      <PanelApps>
        <PanelLauncher $w={42} aria-label="Menu"><MintIcon /></PanelLauncher>
        <PanelLauncher aria-label="Mostrar área de trabalho"><DesktopIcon /></PanelLauncher>
        <PanelApp $open aria-label="Arquivos"><FilesIcon /></PanelApp>
        <PanelApp><Terminal>$_</Terminal></PanelApp>
        <PanelApp aria-label="Firefox"><FirefoxIcon /></PanelApp>
        <PanelApp $open $focused aria-label="Máquinas virtuais"><VirtIcon /><CountBadge>3</CountBadge></PanelApp>
        <PanelApp $open aria-label="Imagens"><PhotoIcon /></PanelApp>
        <PanelApp $open aria-label="Desenho"><PenIcon /></PanelApp>
      </PanelApps>
      <HostTray>
        <AnyDeskIcon />
        <ClipboardIcon />
        <HostShieldIcon />
        <HostNetIcon />
        <HostVolumeIcon />
        <HostClock>18:58</HostClock>
      </HostTray>
    </HostPanel>
  );
}

export default function App() {
  return (
    <Desktop>
      <GlobalStyle />
      <HostHeader />
      <Display>
        <Guest>
          <SettingsWindow />
          <Taskbar />
          <DomainDialog />
        </Guest>
      </Display>
      <Panel />
    </Desktop>
  );
}
